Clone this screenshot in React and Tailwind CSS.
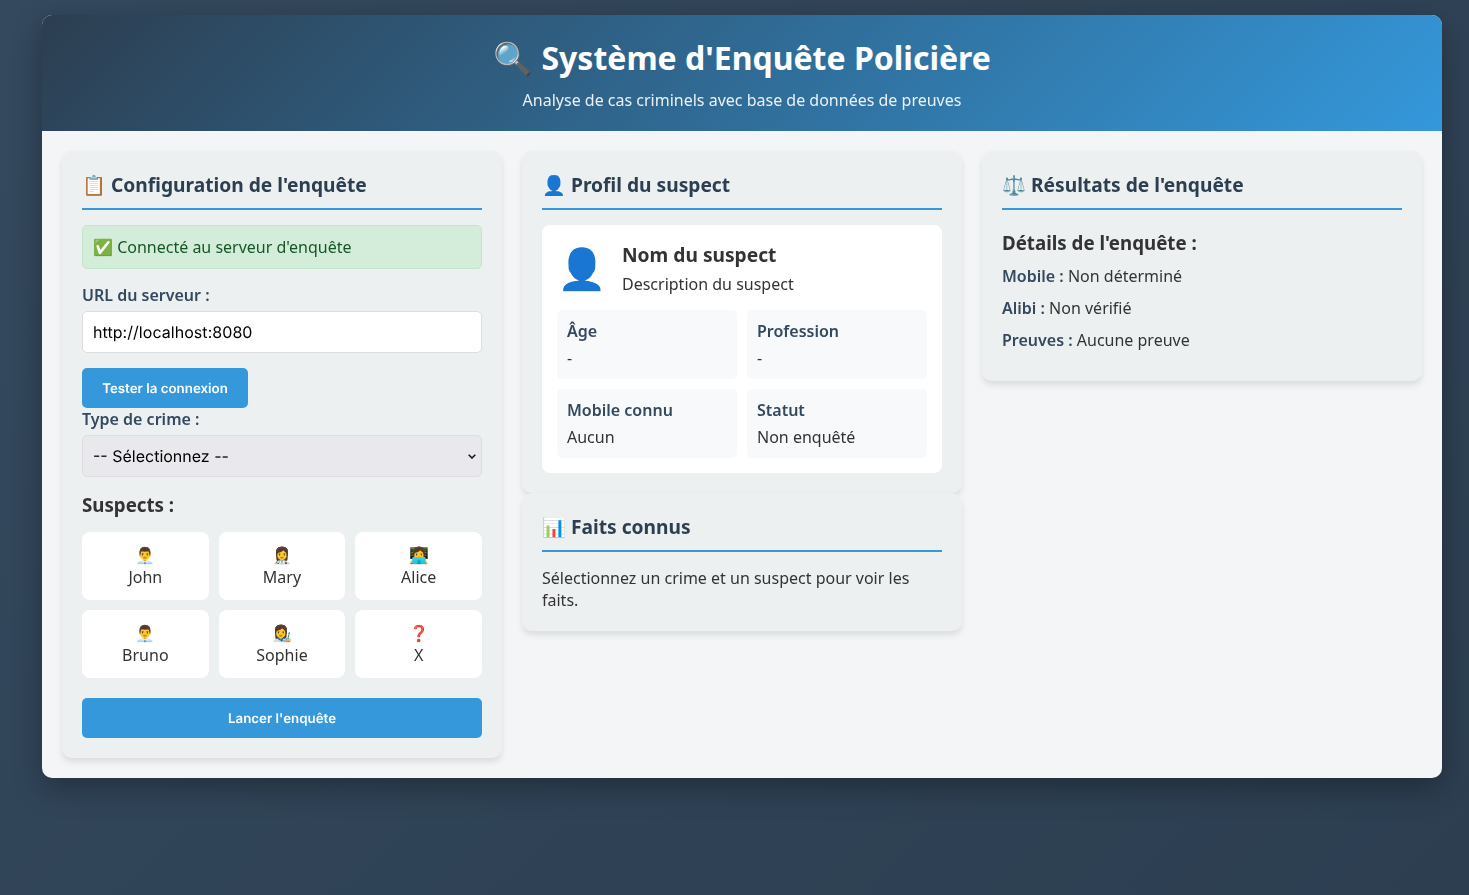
import React from 'react';

const PanelTitle = ({ icon, children }) => (
  <h2 className="text-[19.2px] leading-[27px] font-bold text-[#2c3e50] pb-[10px] mb-[15px] border-b-2 border-[#3498db]">
    {icon} {children}
  </h2>
);

const Panel = ({ children }) => (
  <div className="bg-[#ecf0f1] rounded-[10px] p-5 shadow-[0_4px_6px_rgba(0,0,0,0.1)]">{children}</div>
);

const suspects = [
  { emoji: '👨‍💼', name: 'John' },
  { emoji: '👩‍⚕️', name: 'Mary' },
  { emoji: '👩‍💻', name: 'Alice' },
  { emoji: '👨‍💼', name: 'Bruno' },
  { emoji: '👩‍🎨', name: 'Sophie' },
  { emoji: '❓', name: 'X' },
];

const InfoCell = ({ label, value }) => (
  <div className="bg-[#f8f9fa] rounded-[5px] p-[10px]">
    <div className="font-semibold text-[#34495e] leading-[22px] mb-[5px]">{label}</div>
    <div className="leading-[22px]">{value}</div>
  </div>
);

export default function App() {
  return (
    <div className="min-h-[895px] pt-[15px] bg-[linear-gradient(135deg,#34495e,#2c3e50)] text-[#333] font-['Noto_Sans',sans-serif] text-[16px]">
      <div className="w-[1400px] ml-[42px] bg-white/95 backdrop-blur-[10px] rounded-[10px] overflow-hidden shadow-[0_10px_30px_rgba(0,0,0,0.3)]">
        <header className="h-[116px] pt-[21px] text-center text-white bg-[linear-gradient(135deg,#2c3e50,#3498db)]">
          <h1 className="text-[32px] leading-[44px] font-bold mb-[9px]">🔍 Système d'Enquête Policière</h1>
          <p className="leading-[22px] opacity-90">Analyse de cas criminels avec base de données de preuves</p>
        </header>

        <main className="grid grid-cols-3 gap-5 p-5 items-start">
          <Panel>
            <PanelTitle icon="📋">Configuration de l'enquête</PanelTitle>
            <div className="h-[44px] px-[10px] flex items-center rounded-[5px] bg-[#d4edda] border border-[#c3e6cb] text-[#155724] mb-[15px]">
              ✅ Connecté au serveur d'enquête
            </div>
            <label className="block font-semibold text-[#34495e] leading-[22px] mb-[5px]">URL du serveur :</label>
            <input
              readOnly
              value="http://localhost:8080"
              className="block w-full h-[42px] px-[10px] bg-white border border-[#ddd] rounded-[5px] text-[16px] text-black font-['Inter',sans-serif] [text-rendering:geometricPrecision] tracking-[0.05px] mb-[15px]"
            />
            <button className="block h-10 w-[166px] pt-1 rounded-[5px] bg-[#3498db] text-white text-[13.33px] font-semibold font-['Inter',sans-serif] [text-rendering:geometricPrecision]">
              Tester la connexion
            </button>
            <label className="block font-semibold text-[#34495e] leading-[22px] mb-[5px]">Type de crime :</label>
            <div className="relative mb-[15px]">
              <select className="block w-full h-[42px] px-[10px] appearance-none bg-[#e9e9ed] border border-[#ddd] rounded-[5px] text-[16px] text-black font-['Inter',sans-serif] [text-rendering:geometricPrecision]">
                <option>-- Sélectionnez --</option>
              </select>
              <svg className="absolute right-[6px] top-[19px] pointer-events-none" width="8" height="5" viewBox="0 0 8 5" fill="none">
                <path d="M0.7 0.7 L4 4 L7.3 0.7" stroke="#111" strokeWidth="1.5" />
              </svg>
            </div>
            <h3 className="text-[18.72px] leading-[26px] font-bold mb-[14px]">Suspects :</h3>
            <div className="grid grid-cols-3 gap-[10px] mb-5">
              {suspects.map((s) => (
                <div key={s.name} className="h-[68px] bg-white rounded-[8px] pt-[13px] text-center">
                  <div className="leading-[21px]">{s.emoji}</div>
                  <div className="leading-[22px]">{s.name}</div>
                </div>
              ))}
            </div>
            <button className="block w-full h-10 pt-1 rounded-[5px] bg-[#3498db] text-white text-[13.33px] font-semibold font-['Inter',sans-serif] [text-rendering:geometricPrecision]">
              Lancer l'enquête
            </button>
          </Panel>

          <div>
            <Panel>
              <PanelTitle icon="👤">Profil du suspect</PanelTitle>
              <div className="bg-white rounded-[8px] p-[15px]">
                <div className="flex items-center gap-[15px] mb-[15px]">
                  <div className="w-[50px] text-center text-[40px] leading-[55px]">👤</div>
                  <div className="mt-[2px]">
                    <div className="text-[19.2px] leading-[26px] font-bold mb-[5px]">Nom du suspect</div>
                    <div className="leading-[22px]">Description du suspect</div>
                  </div>
                </div>
                <div className="grid grid-cols-2 gap-[10px]">
                  <InfoCell label="Âge" value="-" />
                  <InfoCell label="Profession" value="-" />
                  <InfoCell label="Mobile connu" value="Aucun" />
                  <InfoCell label="Statut" value="Non enquêté" />
                </div>
              </div>
            </Panel>
            <Panel>
              <PanelTitle icon="📊">Faits connus</PanelTitle>
              <p className="leading-[22px]">Sélectionnez un crime et un suspect pour voir les faits.</p>
            </Panel>
          </div>

          <Panel>
            <PanelTitle icon="⚖️">Résultats de l'enquête</PanelTitle>
            <h3 className="text-[18.72px] leading-[26px] font-bold mt-5 mb-[9px]">Détails de l'enquête :</h3>
            <p className="leading-[22px] mb-[10px]"><strong className="font-semibold text-[#34495e]">Mobile :</strong> Non déterminé</p>
            <p className="leading-[22px] mb-[10px]"><strong className="font-semibold text-[#34495e]">Alibi :</strong> Non vérifié</p>
            <p className="leading-[22px] mb-[10px]"><strong className="font-semibold text-[#34495e]">Preuves :</strong> Aucune preuve</p>
          </Panel>
        </main>
      </div>
    </div>
  );
}
